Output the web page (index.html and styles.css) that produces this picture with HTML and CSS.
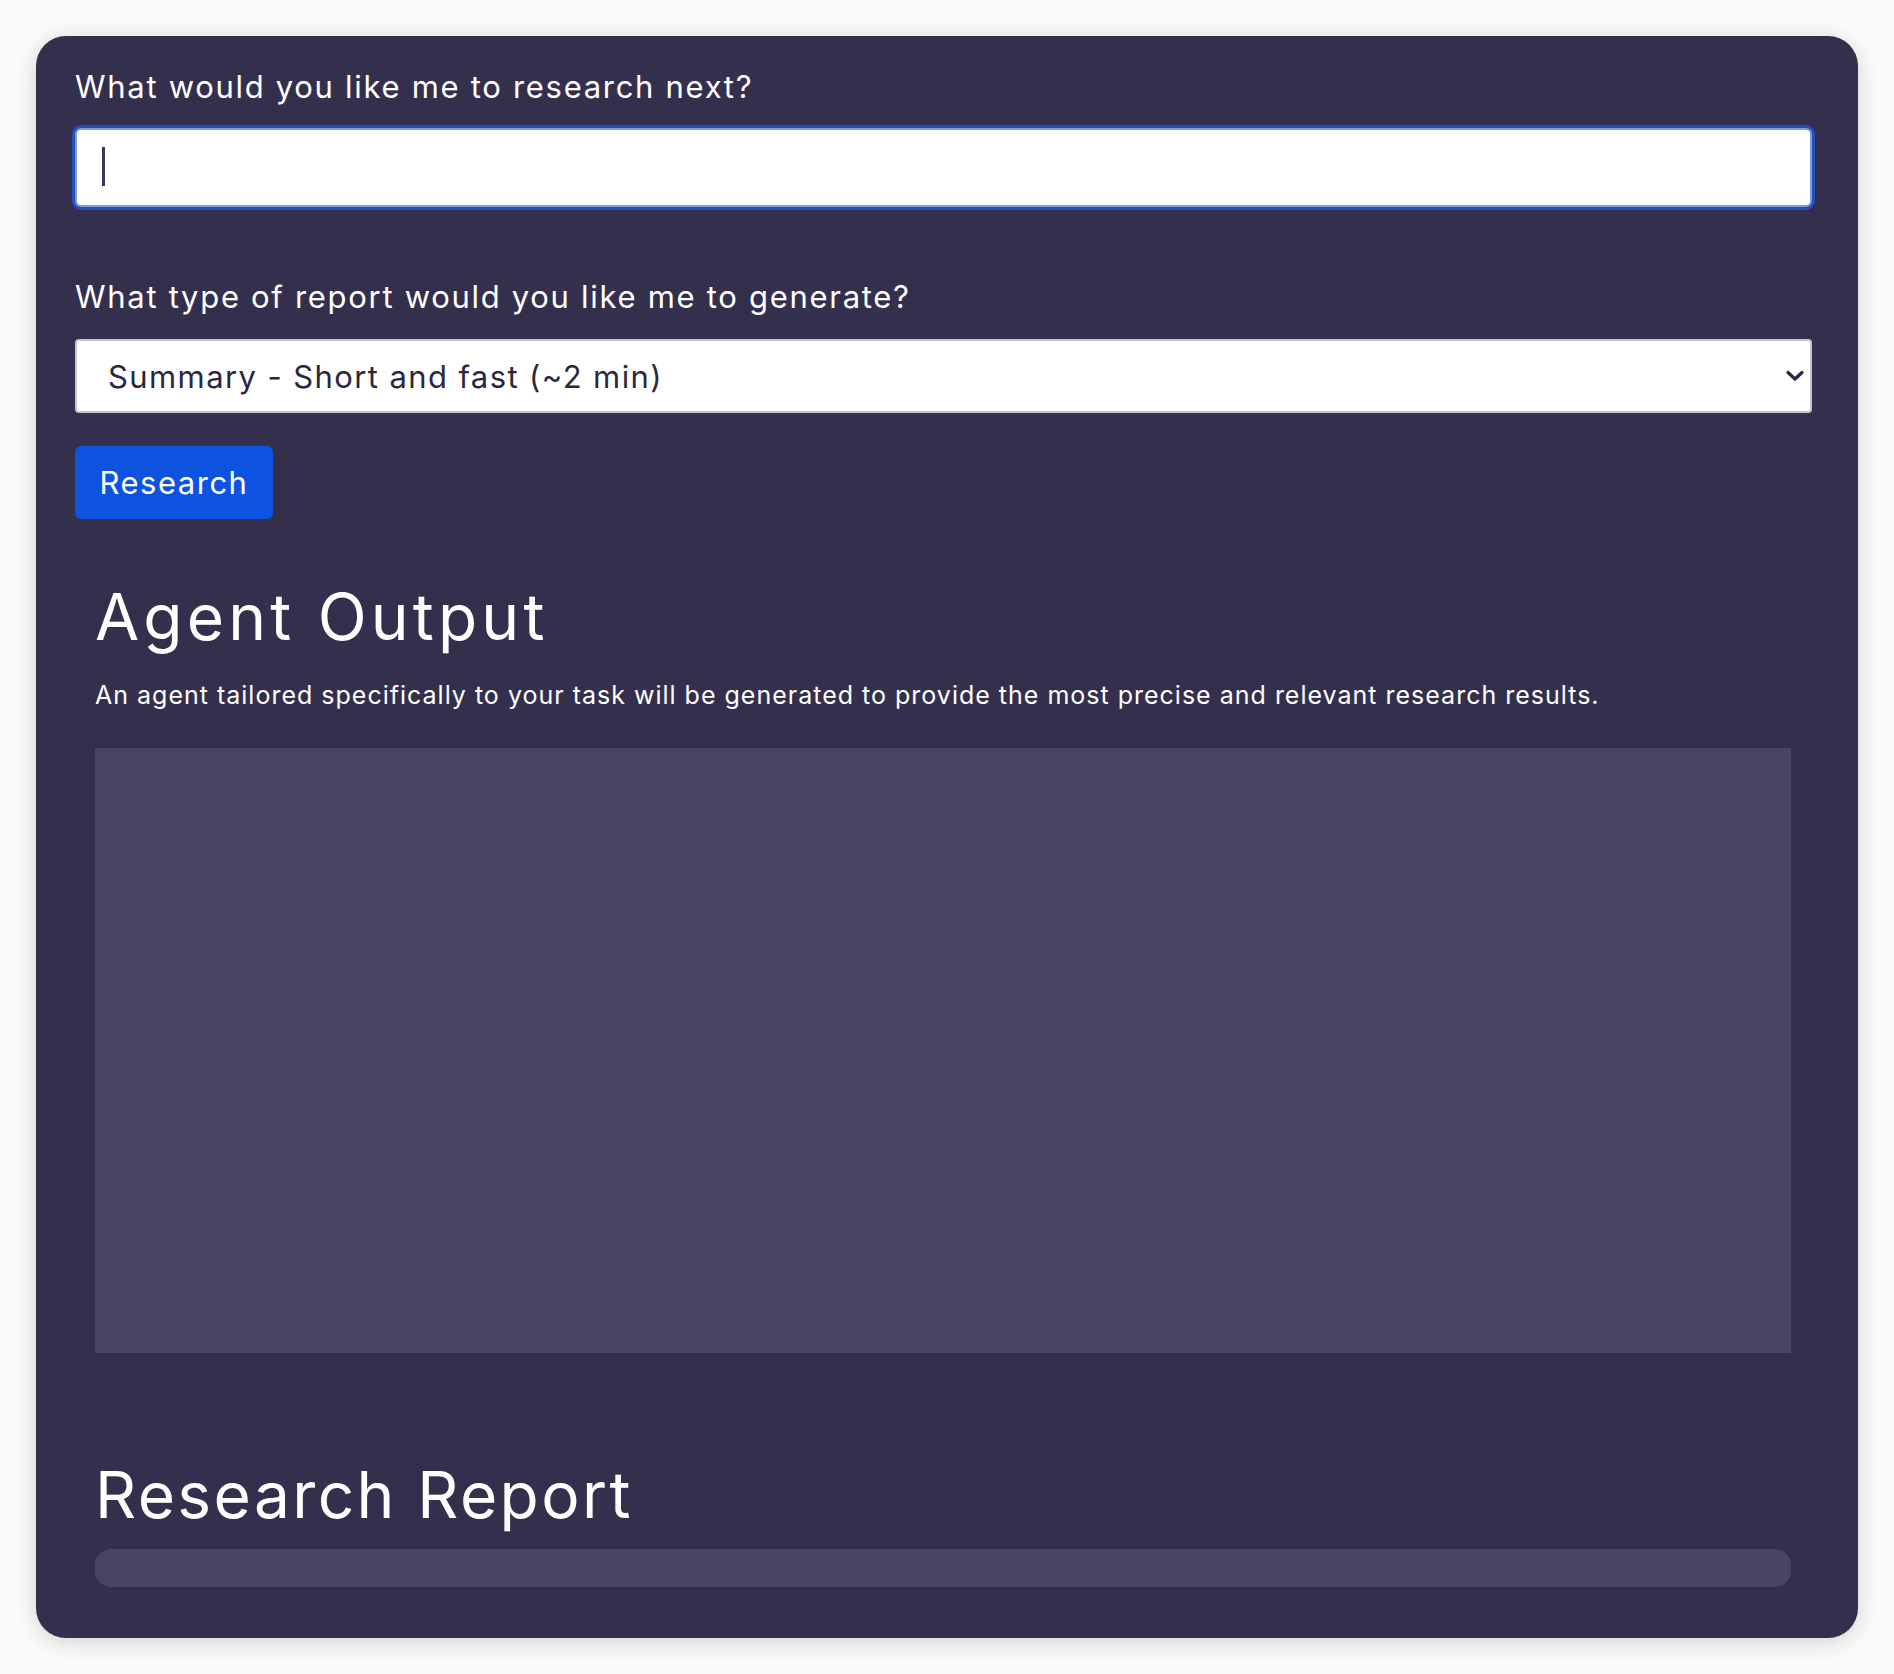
FILE: index.html
```html
<!DOCTYPE html>
<html lang="en">
<head>
<meta charset="utf-8">
<title>Researcher</title>
<link rel="stylesheet" href="styles.css">
</head>
<body>
<main class="card">
  <form class="form">
    <label class="label" for="task">What would you like me to research next?</label>
    <div class="input-wrap">
      <input id="task" class="task-input" type="text">
      <span class="caret"></span>
    </div>
    <label class="label label-type" for="report_type">What type of report would you like me to generate?</label>
    <div class="select-wrap">
      <select id="report_type" class="select">
        <option>Summary - Short and fast (~2 min)</option>
      </select>
      <svg class="chevron" width="20" height="14" viewBox="0 0 20 14"><path d="M3 3.5 L10 10 L17 3.5" fill="none" stroke="#2b2742" stroke-width="3.2" stroke-linecap="round" stroke-linejoin="round"/></svg>
    </div>
    <button class="btn" type="button">Research</button>
  </form>
  <section class="block">
    <h2 class="heading heading-agent">Agent Output</h2>
    <p class="desc">An agent tailored specifically to your task will be generated to provide the most precise and relevant research results.</p>
    <div class="output-box"></div>
  </section>
  <section class="block report">
    <h2 class="heading heading-report">Research Report</h2>
    <div class="report-bar"></div>
  </section>
</main>
</body>
</html>
```
FILE: styles.css
```css
html, body {
  margin: 0;
  padding: 0;
  background: #fafafa;
}
body {
  padding: 36px;
  font-family: "Inter", "Open Sans", sans-serif;
  color: #ffffff;
}
.card {
  background: #352f4e;
  border-radius: 30px;
  box-shadow: 0 4px 22px rgba(0, 0, 0, 0.16);
  padding: 31px 46px 51px 39px;
}
.form {
  display: flex;
  flex-direction: column;
  align-items: flex-start;
}
.label {
  display: block;
  font-size: 31px;
  line-height: 40px;
  font-weight: 400;
  letter-spacing: 1.7px;
  color: #ffffff;
  margin-bottom: 21px;
}
.label-type {
  margin-top: 70px;
  margin-bottom: 22px;
}
.input-wrap {
  position: relative;
  align-self: stretch;
}
.task-input {
  display: block;
  box-sizing: border-box;
  width: 100%;
  height: 79px;
  margin: 0;
  border: 2px solid #7b9ede;
  border-radius: 6px;
  background: #ffffff;
  box-shadow: 0 0 0 3px rgba(32, 92, 225, 0.75);
  outline: none;
  font-size: 30px;
  padding: 0 26px;
}
.caret {
  position: absolute;
  left: 27px;
  top: 19px;
  width: 3px;
  height: 39px;
  background: #3a3552;
}
.select-wrap {
  position: relative;
  align-self: stretch;
}
.select {
  display: block;
  box-sizing: border-box;
  width: 100%;
  height: 74px;
  margin: 0;
  -webkit-appearance: none;
  appearance: none;
  border: 2px solid #c3c6d6;
  border-radius: 4px;
  background: #ffffff;
  font-family: "Inter", "Open Sans", sans-serif;
  font-size: 31px;
  letter-spacing: 1.4px;
  color: #2b2742;
  padding: 0 0 0 31px;
}
.chevron {
  position: absolute;
  right: 7px;
  top: 30px;
  pointer-events: none;
}
.btn {
  margin-top: 33px;
  height: 73px;
  width: 198px;
  border: none;
  border-radius: 6px;
  background: #0d53df;
  color: #ffffff;
  font-family: "Inter", "Open Sans", sans-serif;
  font-size: 31px;
  letter-spacing: 1.5px;
  padding: 0;
}
.block {
  padding: 0 21px 0 20px;
  margin-top: 59px;
}
.heading {
  margin: 0;
  font-size: 64px;
  line-height: 77px;
  font-weight: 400;
}
.heading-agent {
  letter-spacing: 4.2px;
}
.heading-report {
  letter-spacing: 2.4px;
}
.desc {
  margin: 24px 0 0 0;
  font-size: 25px;
  line-height: 32px;
  letter-spacing: 1px;
}
.output-box {
  margin-top: 37px;
  height: 605px;
  background: #4a4464;
}
.report {
  margin-top: 103px;
}
.report-bar {
  margin-top: 16px;
  height: 38px;
  border-radius: 16px;
  background: #4a4464;
}
```
